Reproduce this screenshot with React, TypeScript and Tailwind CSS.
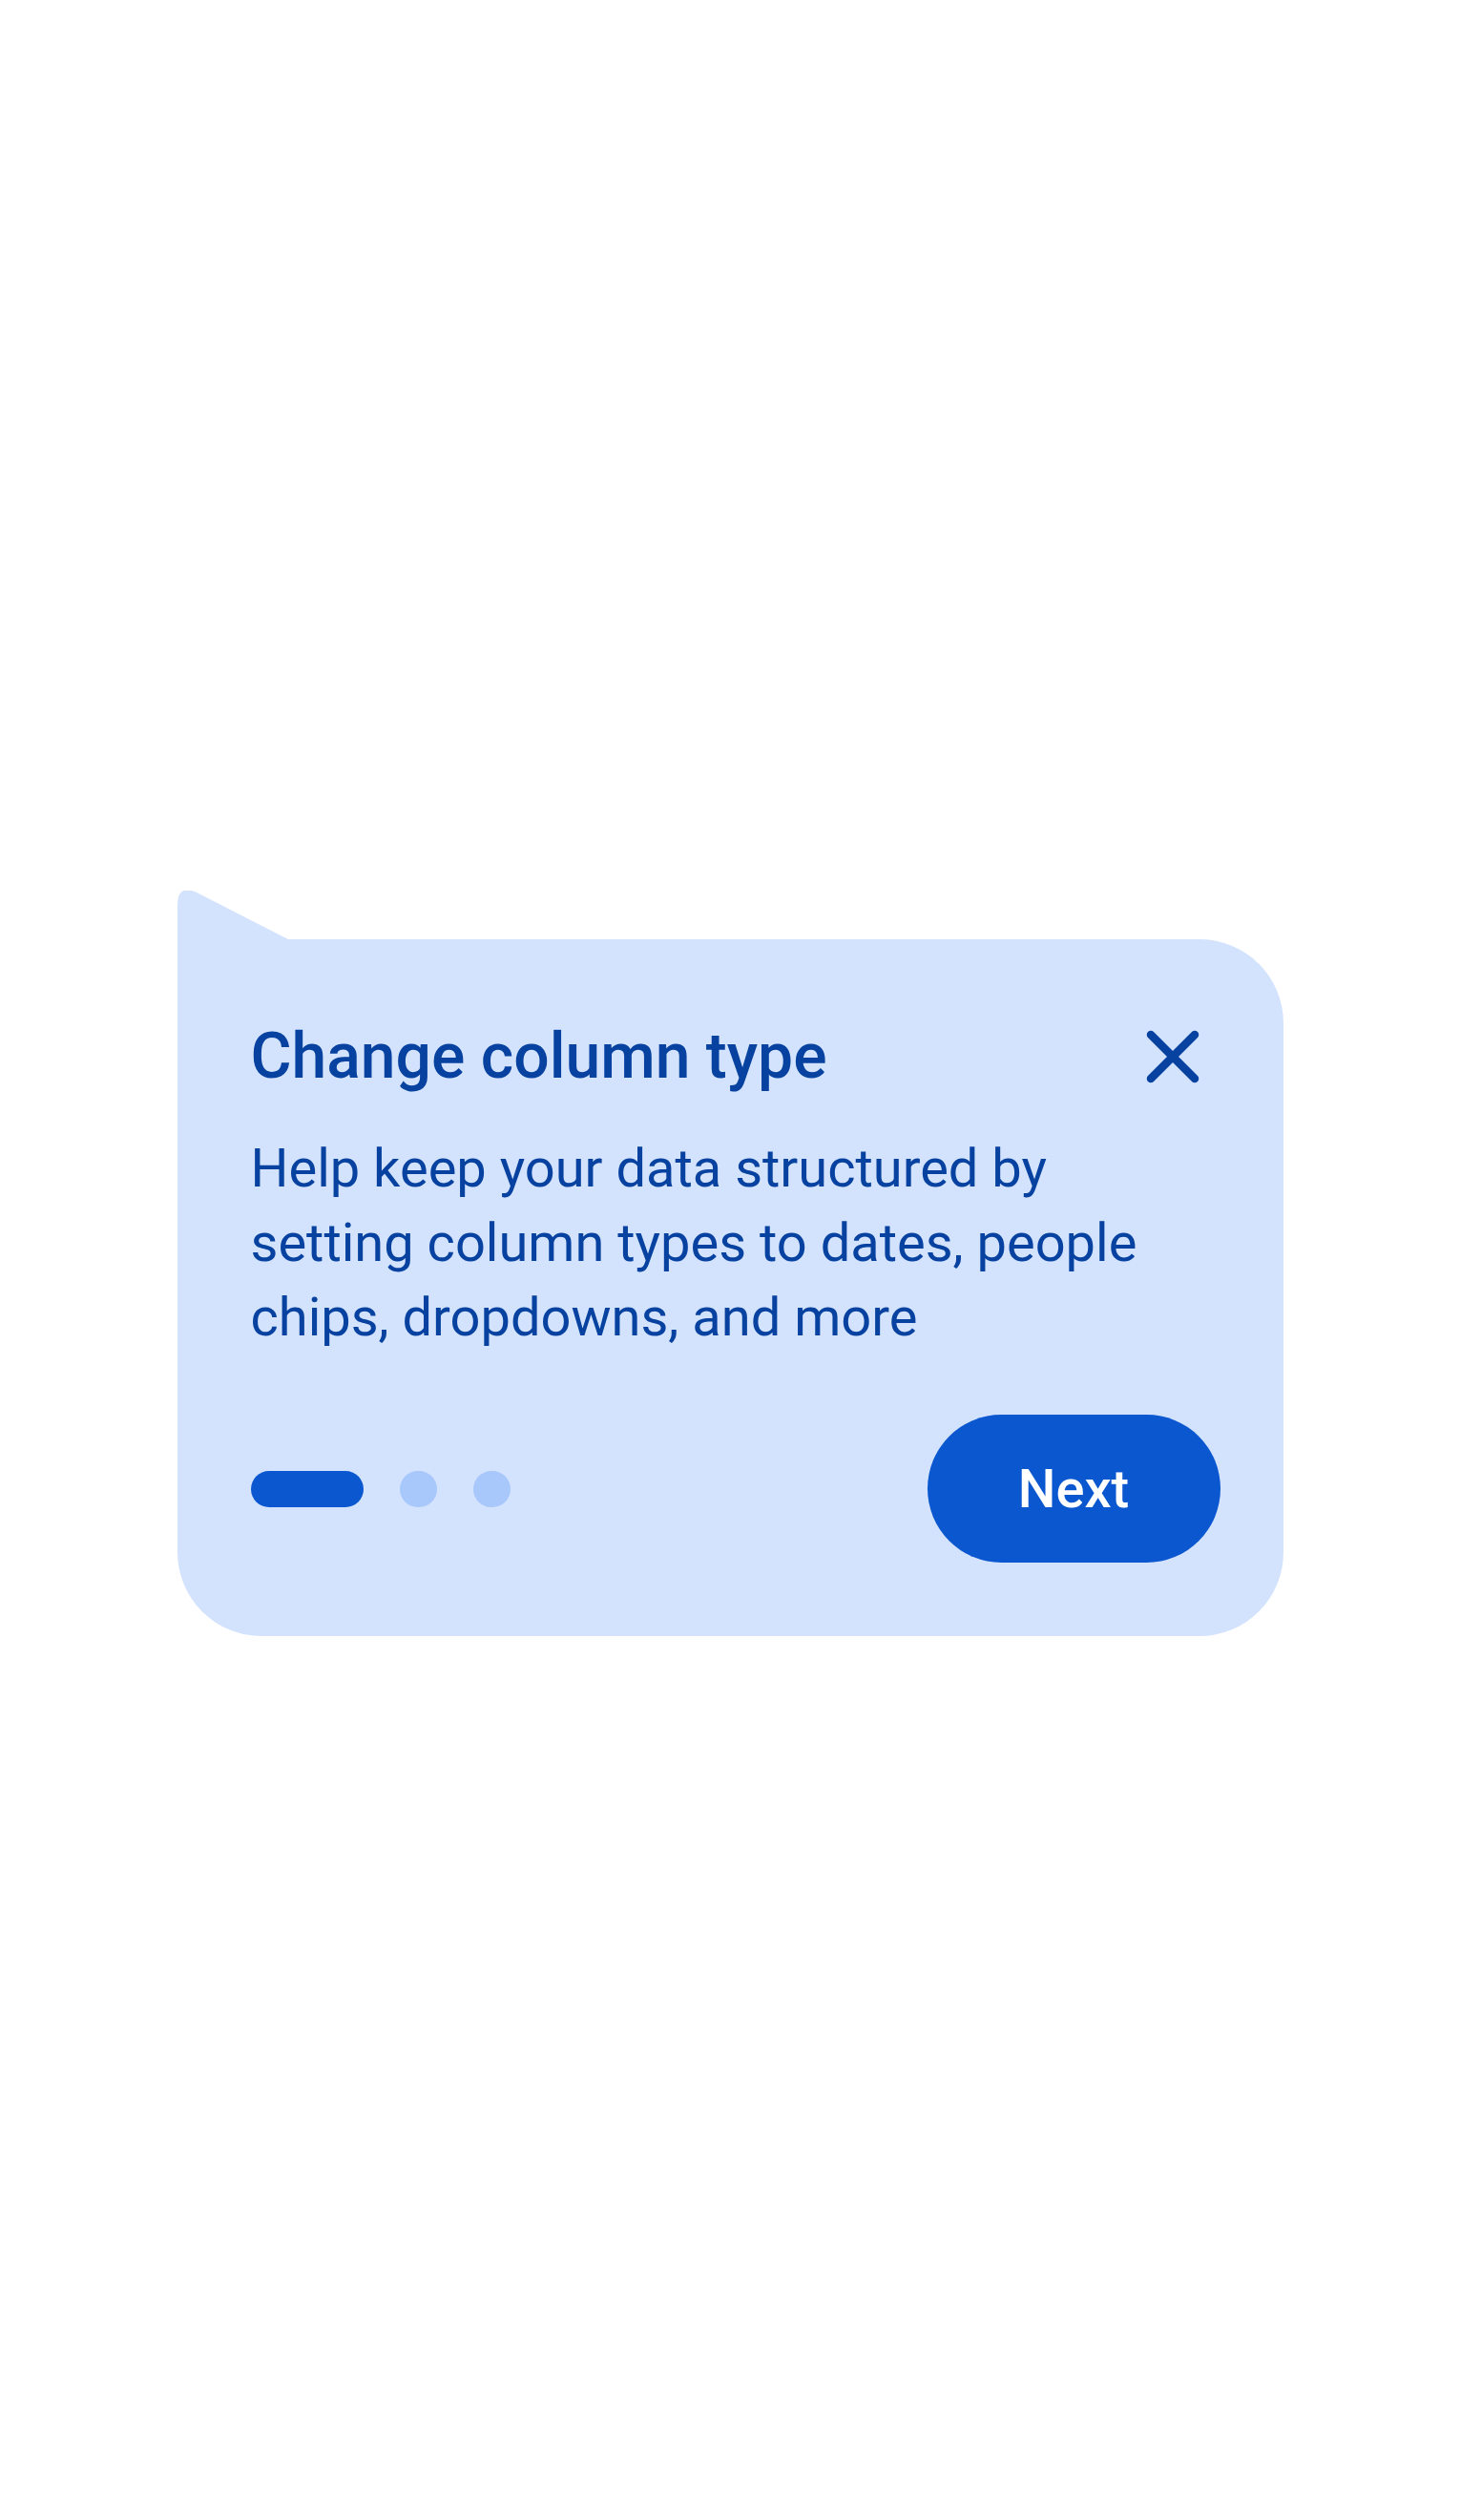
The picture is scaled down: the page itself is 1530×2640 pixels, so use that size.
import React from "react";

export default function App() {
  return (
    <div
      className="w-full h-[2640px] bg-white pt-[984px]"
      style={{ fontFamily: "Roboto, 'Noto Sans', sans-serif" }}
    >
      <div className="relative mx-auto w-[1159px] bg-[#d3e3fd] rounded-[88px] rounded-tl-none pl-[80px] pr-[66px] pt-[83px] pb-[77px]">
        <svg
          className="absolute left-0 top-[-51px]"
          width="118"
          height="53"
          viewBox="0 0 118 53"
        >
          <path d="M0 53 L0 15 Q0 -7 19.7 1.8 L116 51 L118 51 L118 53 Z" fill="#d3e3fd" />
        </svg>

        <div className="flex items-center justify-between">
          <h2 className="text-[66px] leading-[80px] font-medium text-[#0842a0] -ml-[3px]">
            Change column type
          </h2>
          <button className="w-[100px] h-[80px] flex items-center justify-center" aria-label="Close">
            <svg width="56" height="56" viewBox="0 0 56 56">
              <path
                d="M5 5 L51 51 M51 5 L5 51"
                stroke="#0842a0"
                strokeWidth="8.5"
                strokeLinecap="round"
                fill="none"
              />
            </svg>
          </button>
        </div>

        <p className="mt-[38px] -ml-[3px] text-[56px] leading-[78px] text-[#0842a0]">
          Help keep your data structured by
          <br />
          setting column types to dates, people
          <br />
          chips, dropdowns, and more
        </p>

        <div className="mt-[63px] flex items-center justify-between">
          <div className="flex items-center gap-[38px] -ml-[3px]">
            <div className="w-[118px] h-[38px] rounded-full bg-[#0b57d0]" />
            <div className="w-[39px] h-[38px] rounded-full bg-[#a8c7fa]" />
            <div className="w-[39px] h-[38px] rounded-full bg-[#a8c7fa]" />
          </div>
          <button className="w-[307px] h-[155px] rounded-full bg-[#0b57d0] text-white text-[56px] font-medium flex items-center justify-center">
            Next
          </button>
        </div>
      </div>
    </div>
  );
}
